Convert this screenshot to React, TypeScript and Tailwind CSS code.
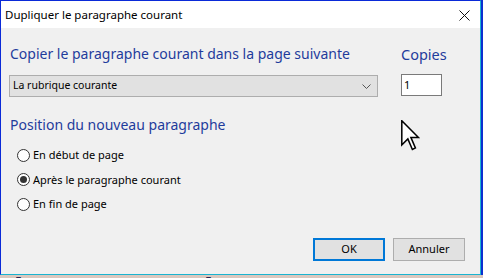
import { useState } from 'react';

const positions = ['En début de page', 'Après le paragraphe courant', 'En fin de page'];

function Radio({ label, checked, onClick }: { label: string; checked: boolean; onClick: () => void }) {
  return (
    <div className="flex items-center h-[24.5px] cursor-default" onClick={onClick}>
      <span className="w-[13px] h-[13px] rounded-full border border-[#333333] bg-white flex items-center justify-center">
        {checked && <span className="w-[7px] h-[7px] rounded-full bg-[#333333]" />}
      </span>
      <span className="ml-[3px] text-[11px] text-black">{label}</span>
    </div>
  );
}

export default function App() {
  const [pos, setPos] = useState(1);

  return (
    <div
      className="relative w-[483px] h-[278px] overflow-hidden bg-[#0b2fd0] flex flex-col"
      style={{ fontFamily: '"Noto Sans", "Open Sans", sans-serif' }}
    >
      <div className="w-[481px] h-[275px] flex flex-col border-l border-t border-r border-b border-l-[#0a2ad8] border-t-[#0a2ad8] border-r-[#1ab4d0] border-b-[#1ab4d0]">
        {/* title bar */}
        <div className="h-[27px] bg-white flex items-center justify-between pl-[4px] pr-[10px]">
          <span className="text-[11.5px] text-black">Dupliquer le paragraphe courant</span>
          <svg width="11" height="11" viewBox="0 0 11 11" className="mt-[1px]">
            <path d="M0.5 0.5 L10.5 10.5 M10.5 0.5 L0.5 10.5" stroke="#111" strokeWidth="1" />
          </svg>
        </div>

        {/* body */}
        <div className="flex-1 bg-[#f0f0f0] flex flex-col pl-[8px] pr-[15px] pt-[16px]">
          <div className="grid grid-cols-[369px_41px] gap-x-[23px]">
            <div className="text-[14px] leading-[20px] text-[#1f3c9c] pl-[1px] whitespace-nowrap">
              Copier le paragraphe courant dans la page suivante
            </div>
            <div className="text-[14.5px] leading-[20px] text-[#1f3c9c]">Copies</div>
            <div className="mt-[11px] h-[22px] bg-[#e1e1e1] border border-[#adadad] flex items-center justify-between pl-[3px] pr-[6px]">
              <span className="text-[10.5px] text-black">La rubrique courante</span>
              <svg width="9" height="5" viewBox="0 0 9 5">
                <path d="M0.5 0.5 L4.5 4.5 L8.5 0.5" fill="none" stroke="#555" strokeWidth="1" />
              </svg>
            </div>
            <div className="mt-[10px] h-[22px] bg-white border border-[#7a7a7a] flex items-center pl-[2px]">
              <span className="text-[11px] text-black">1</span>
            </div>
          </div>

          <div className="mt-[18px] text-[14px] leading-[20px] text-[#1f3c9c] pl-[1px]">
            Position du nouveau paragraphe
          </div>

          <div className="mt-[8px] pl-[8px] flex flex-col">
            {positions.map((p, i) => (
              <Radio key={p} label={p} checked={pos === i} onClick={() => setPos(i)} />
            ))}
          </div>

          <div className="mt-[21px] flex justify-end gap-[8px]">
            <button className="w-[72px] h-[23px] bg-[#e1e1e1] border-2 border-[#0078d7] text-[11px] text-black">
              OK
            </button>
            <button className="w-[72px] h-[23px] bg-[#e1e1e1] border border-[#adadad] text-[11px] text-black">
              Annuler
            </button>
          </div>
        </div>
      </div>

      {/* strip of the window behind */}
      <div className="h-[3px] overflow-hidden bg-[#dac8bf] pl-[4px]">
        <div className="text-[30px] leading-none font-bold text-[#2a2050] whitespace-nowrap mt-[-1px]">
          des commandes
        </div>
      </div>

      {/* mouse pointer */}
      <svg
        className="absolute left-[401px] top-[120px]"
        width="19"
        height="31"
        viewBox="0 0 12.5 20.5"
      >
        <path
          d="M0.5 0.5 L0.5 16.5 L4.5 12.5 L7.5 19.5 L9.5 18.5 L6.5 11.5 L11.5 11.5 Z"
          fill="white"
          stroke="black"
          strokeWidth="1"
          strokeLinejoin="miter"
        />
      </svg>
    </div>
  );
}
